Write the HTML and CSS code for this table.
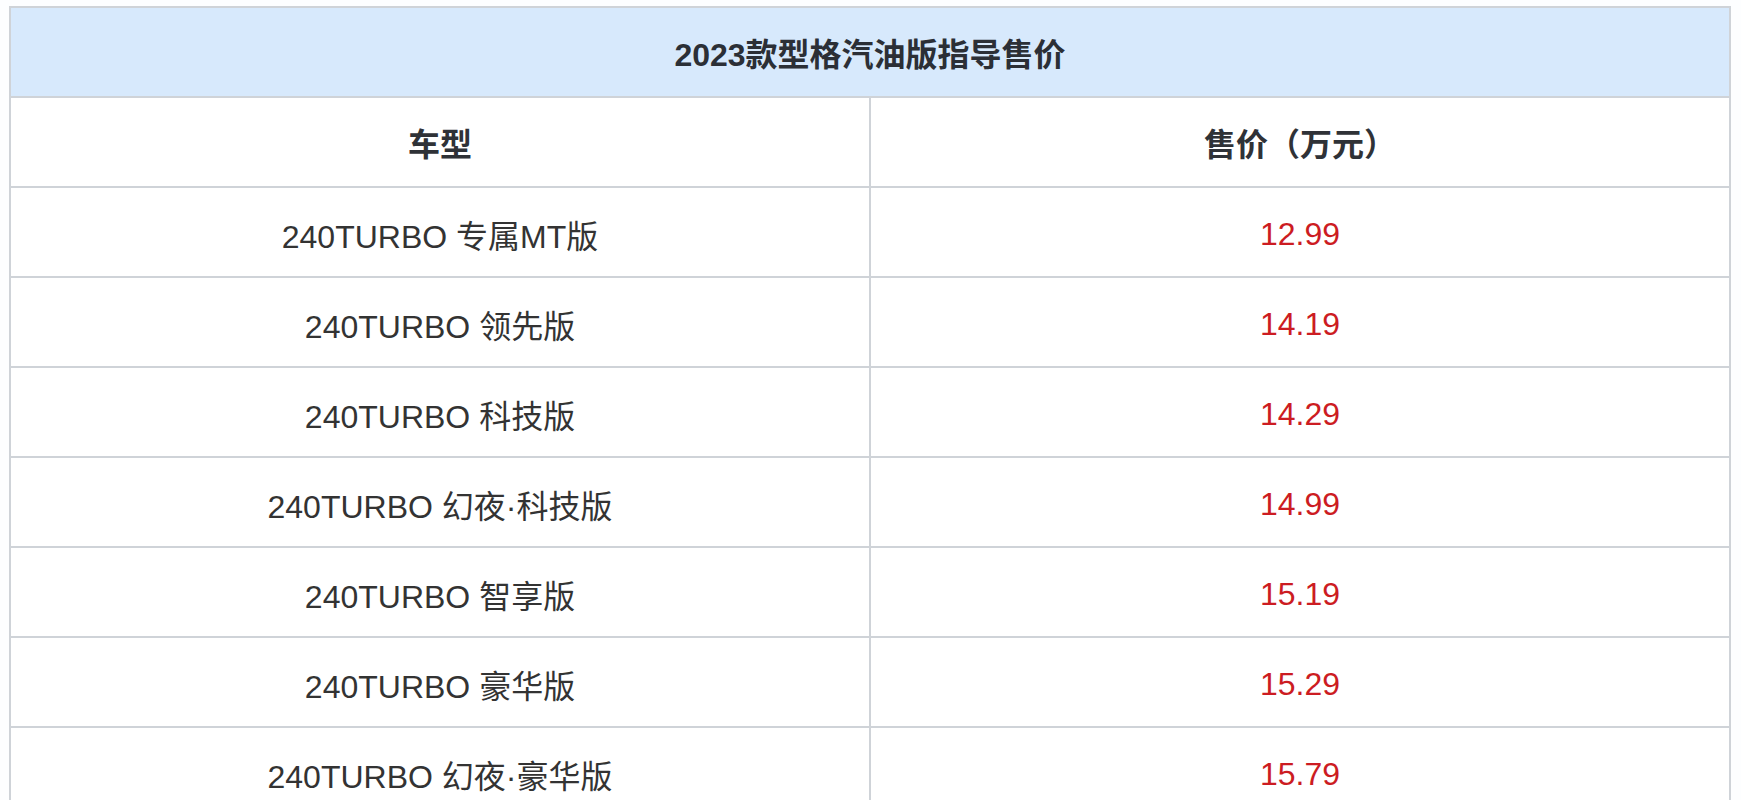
FILE: index.html
```html
<!DOCTYPE html>
<html lang="zh-CN">
<head>
<meta charset="utf-8">
<title>2023款型格汽油版指导售价</title>
<link rel="stylesheet" href="styles.css">
</head>
<body>
<div class="page">
<table class="price-table">
  <thead>
    <tr class="title-row"><th colspan="2">2023款型格汽油版指导售价</th></tr>
    <tr class="head-row"><th>车型</th><th>售价（万元）</th></tr>
  </thead>
  <tbody>
    <tr><td>240TURBO 专属MT版</td><td class="price">12.99</td></tr>
    <tr><td>240TURBO 领先版</td><td class="price">14.19</td></tr>
    <tr><td>240TURBO 科技版</td><td class="price">14.29</td></tr>
    <tr><td>240TURBO 幻夜·科技版</td><td class="price">14.99</td></tr>
    <tr><td>240TURBO 智享版</td><td class="price">15.19</td></tr>
    <tr><td>240TURBO 豪华版</td><td class="price">15.29</td></tr>
    <tr><td>240TURBO 幻夜·豪华版</td><td class="price">15.79</td></tr>
  </tbody>
</table>
</div>
</body>
</html>
```
FILE: styles.css
```css
html, body {
  margin: 0;
  padding: 0;
  background: #fdfeff;
}
.page {
  padding: 6px 0 0 9px;
}
.price-table {
  width: 1722px;
  border-collapse: collapse;
  table-layout: fixed;
  font-family: "Liberation Sans", Arial, "Noto Sans CJK SC", sans-serif;
  font-size: 32px;
  color: #333333;
}
.price-table th,
.price-table td {
  border: 2px solid #cfd3d8;
  height: 88px;
  padding: 0;
  text-align: center;
  vertical-align: middle;
}
.title-row th {
  background: #d7e9fc;
  color: #2b2f36;
  font-weight: bold;
}
.head-row th {
  background: #ffffff;
  font-weight: bold;
  color: #2f3237;
}
.price-table td {
  background: #ffffff;
  padding-top: 4px;
  height: 84px;
}
.price-table td.price {
  color: #cc1c22;
}
```
